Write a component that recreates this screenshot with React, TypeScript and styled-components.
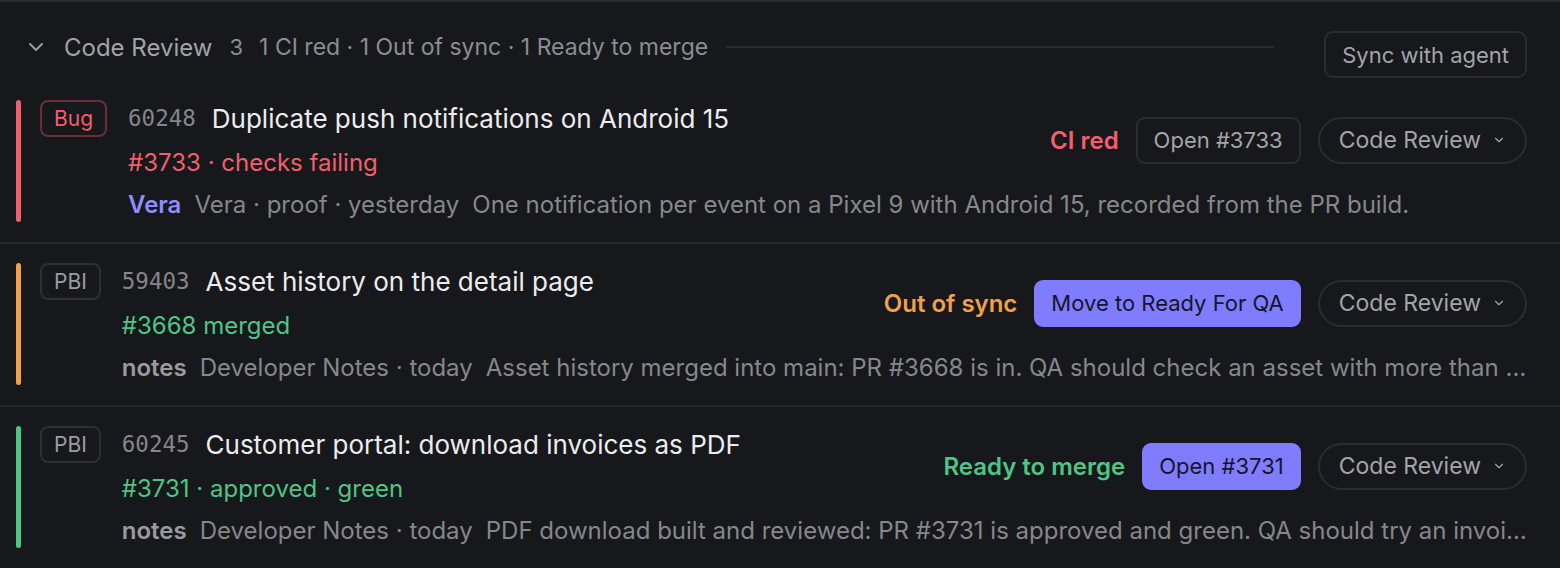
import React from "react";
import styled, { createGlobalStyle, css } from "styled-components";

const GlobalStyle = createGlobalStyle`
  html, body {
    margin: 0;
    padding: 0;
    background: #17181b;
  }
  body {
    font-family: Inter, "Noto Sans", sans-serif;
    color: #e8e8ea;
    -webkit-font-smoothing: antialiased;
  }
`;

type Tone = "red" | "orange" | "green";

const toneColor: Record<Tone, string> = {
  red: "#f25f6c",
  orange: "#f2a04a",
  green: "#4fc585",
};

const Panel = styled.section`
  width: 1560px;
  min-height: 568px;
  background: #17181b;
  border-top: 2px solid #2a2b2f;
  box-sizing: border-box;
`;

const Header = styled.header`
  display: flex;
  align-items: flex-start;
  height: 86px;
  padding: 0 33px 0 24px;
  box-sizing: border-box;
`;

const HeaderLead = styled.div`
  flex: 1;
  display: flex;
  align-items: center;
  height: 36px;
  margin-top: 27px;
`;

const Chevron = styled.span`
  display: flex;
  width: 24px;
  height: 24px;
  margin-right: 16px;
  color: #9a9ba0;
  svg {
    width: 24px;
    height: 24px;
  }
`;

const GroupTitle = styled.span`
  font-size: 24px;
  color: #a2a3a8;
  margin-right: 17px;
`;

const GroupCount = styled.span`
  font-size: 22px;
  color: #8c8d92;
  margin-right: 16px;
`;

const Summary = styled.span`
  font-size: 23px;
  color: #8c8d92;
  white-space: nowrap;
`;

const Rule = styled.div`
  flex: 1;
  height: 2px;
  background: #2a2b2f;
  margin: 0 50px 0 18px;
`;

const GhostButton = styled.button`
  font-family: inherit;
  font-size: 22px;
  color: #a3a4a9;
  background: transparent;
  border: 2px solid #2b2c30;
  border-radius: 9px;
  height: 47px;
  padding: 0 16px;
  white-space: nowrap;
  cursor: pointer;
`;

const SyncButton = styled(GhostButton)`
  margin-top: 29px;
`;

const Row = styled.article<{ $first?: boolean }>`
  display: flex;
  align-items: stretch;
  padding: ${(p) => (p.$first ? "12px" : "19px")} 33px 20px 16px;
  border-top: ${(p) => (p.$first ? "none" : "2px solid #26272b")};
`;

const Accent = styled.div<{ $tone: Tone }>`
  width: 5px;
  border-radius: 3px;
  background: ${(p) => toneColor[p.$tone]};
  margin-right: 19px;
  flex: none;
`;

const TypeBadge = styled.span<{ $bug?: boolean }>`
  align-self: flex-start;
  flex: none;
  height: 37px;
  box-sizing: border-box;
  display: flex;
  align-items: center;
  font-size: 21px;
  border-radius: 8px;
  margin-right: 21px;
  padding: 0 12px;
  ${(p) =>
    p.$bug
      ? css`
          color: #f25f6c;
          border: 2px solid #6a2f36;
        `
      : css`
          color: #9c9da2;
          border: 2px solid #2e2f33;
        `}
`;

const Main = styled.div`
  flex: 1;
  min-width: 0;
  display: flex;
  flex-direction: column;
  gap: 8px;
`;

const Top = styled.div`
  display: flex;
  align-items: center;
  gap: 16px;
`;

const Lines = styled.div`
  flex: 1;
  min-width: 0;
  display: flex;
  flex-direction: column;
  gap: 8px;
`;

const TitleLine = styled.div`
  height: 36px;
  display: flex;
  align-items: center;
  white-space: nowrap;
`;

const ItemId = styled.span`
  font-family: "DejaVu Sans Mono", "Liberation Mono", monospace;
  font-size: 22.5px;
  color: #85868b;
  margin-right: 16px;
`;

const Title = styled.span`
  font-size: 26px;
  color: #ececee;
`;

const PrLine = styled.div<{ $tone: Tone }>`
  height: 36px;
  display: flex;
  align-items: center;
  font-size: 24px;
  color: ${(p) => toneColor[p.$tone]};
  white-space: nowrap;
`;

const Actions = styled.div`
  display: flex;
  align-items: center;
  gap: 17px;
  flex: none;
`;

const Status = styled.span<{ $tone: Tone }>`
  font-size: 24px;
  font-weight: 600;
  color: ${(p) => toneColor[p.$tone]};
  white-space: nowrap;
`;

const PrimaryButton = styled(GhostButton)`
  background: #7f7cff;
  border-color: #7f7cff;
  color: #16162a;
  padding: 0 15px;
`;

const StageSelect = styled.button`
  font-family: inherit;
  font-size: 23px;
  color: #a3a4a9;
  background: transparent;
  border: 2px solid #2b2c30;
  border-radius: 999px;
  height: 47px;
  padding: 0 19px;
  display: flex;
  align-items: center;
  gap: 11px;
  white-space: nowrap;
  cursor: pointer;
  svg {
    width: 14px;
    height: 14px;
  }
`;

const MetaLine = styled.div`
  height: 34px;
  line-height: 34px;
  font-size: 24px;
  color: #86878c;
  white-space: nowrap;
  overflow: hidden;
  text-overflow: ellipsis;
`;

const MetaLabel = styled.span<{ $accent?: boolean }>`
  font-weight: 600;
  color: ${(p) => (p.$accent ? "#8e8cff" : "#9a9ba0")};
  margin-right: 13px;
`;

const MetaSource = styled.span`
  margin-right: 13px;
`;

const ChevronDown = () => (
  <svg viewBox="0 0 24 24" fill="none" stroke="currentColor" strokeWidth="2" strokeLinecap="round" strokeLinejoin="round">
    <path d="M6 9l6 6 6-6" />
  </svg>
);

type Item = {
  type: "Bug" | "PBI";
  id: string;
  title: string;
  pr: string;
  tone: Tone;
  status: string;
  action: string;
  primary: boolean;
  label: string;
  labelAccent?: boolean;
  source: string;
  note: string;
};

const items: Item[] = [
  {
    type: "Bug",
    id: "60248",
    title: "Duplicate push notifications on Android 15",
    pr: "#3733 · checks failing",
    tone: "red",
    status: "CI red",
    action: "Open #3733",
    primary: false,
    label: "Vera",
    labelAccent: true,
    source: "Vera · proof · yesterday",
    note: "One notification per event on a Pixel 9 with Android 15, recorded from the PR build.",
  },
  {
    type: "PBI",
    id: "59403",
    title: "Asset history on the detail page",
    pr: "#3668 merged",
    tone: "orange",
    status: "Out of sync",
    action: "Move to Ready For QA",
    primary: true,
    label: "notes",
    source: "Developer Notes · today",
    note: "Asset history merged into main: PR #3668 is in. QA should check an asset with more than 50 history entries and confirm paging works.",
  },
  {
    type: "PBI",
    id: "60245",
    title: "Customer portal: download invoices as PDF",
    pr: "#3731 · approved · green",
    tone: "green",
    status: "Ready to merge",
    action: "Open #3731",
    primary: true,
    label: "notes",
    source: "Developer Notes · today",
    note: "PDF download built and reviewed: PR #3731 is approved and green. QA should try an invoice with several pages and a credit note.",
  },
];

const prTone = (item: Item): Tone => (item.tone === "red" ? "red" : "green");

export default function App() {
  return (
    <>
      <GlobalStyle />
      <Panel>
        <Header>
          <HeaderLead>
            <Chevron>
              <ChevronDown />
            </Chevron>
            <GroupTitle>Code Review</GroupTitle>
            <GroupCount>3</GroupCount>
            <Summary>1 CI red · 1 Out of sync · 1 Ready to merge</Summary>
            <Rule />
          </HeaderLead>
          <SyncButton>Sync with agent</SyncButton>
        </Header>
        {items.map((item, i) => (
          <Row key={item.id} $first={i === 0}>
            <Accent $tone={item.tone} />
            <TypeBadge $bug={item.type === "Bug"}>{item.type}</TypeBadge>
            <Main>
              <Top>
                <Lines>
                  <TitleLine>
                    <ItemId>{item.id}</ItemId>
                    <Title>{item.title}</Title>
                  </TitleLine>
                  <PrLine $tone={prTone(item)}>{item.pr}</PrLine>
                </Lines>
                <Actions>
                  <Status $tone={item.tone}>{item.status}</Status>
                  {item.primary ? (
                    <PrimaryButton>{item.action}</PrimaryButton>
                  ) : (
                    <GhostButton>{item.action}</GhostButton>
                  )}
                  <StageSelect>
                    Code Review
                    <ChevronDown />
                  </StageSelect>
                </Actions>
              </Top>
              <MetaLine>
                <MetaLabel $accent={item.labelAccent}>{item.label}</MetaLabel>
                <MetaSource>{item.source}</MetaSource>
                {item.note}
              </MetaLine>
            </Main>
          </Row>
        ))}
      </Panel>
    </>
  );
}
